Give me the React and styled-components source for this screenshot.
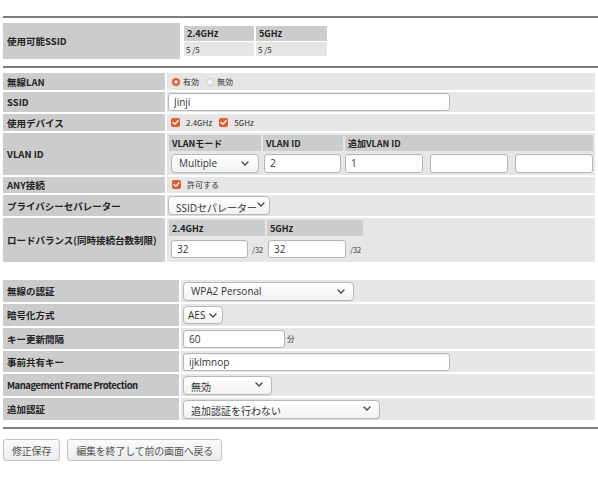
import React from 'react';
import styled, { createGlobalStyle } from 'styled-components';

const ORANGE = '#e5592c';
const LABEL_BG = '#cccccc';
const VALUE_BG = '#e6e6e6';

const GlobalStyle = createGlobalStyle`
  html, body {
    margin: 0;
    padding: 0;
    background: #fff;
  }
  body {
    font-family: "Noto Sans CJK JP", "Noto Sans", sans-serif;
    color: #222;
  }
`;

const App = () => (
  <Page>
    <GlobalStyle />
    <Rule $mt={0} $mb={3} />

    <FormTable>
      <tbody>
        <tr>
          <Label $w={177} $h={36}>使用可能SSID</Label>
          <Value $plain $pl={0}>
            <SubTable $spacing="2px 1px">
              <tbody>
                <tr>
                  <SubHead $w={70} $h={15}>2.4GHz</SubHead>
                  <SubHead $w={71} $h={15}>5GHz</SubHead>
                </tr>
                <tr>
                  <SubCell $bg={VALUE_BG} $h={14} $pl={2}>5 /5</SubCell>
                  <SubCell $bg={VALUE_BG} $h={14} $pl={2}>5 /5</SubCell>
                </tr>
              </tbody>
            </SubTable>
          </Value>
        </tr>
      </tbody>
    </FormTable>

    <Rule $mt={5} $mb={3} />

    <FormTable $w={596}>
      <tbody>
        <tr>
          <Label $w={162} $h={17}>無線LAN</Label>
          <Value $pl={5}>
            <Options>
              <Choice><Radio $on />有効</Choice>
              <Choice><Radio />無効</Choice>
            </Options>
          </Value>
        </tr>
        <tr>
          <Label $w={162} $h={20}>SSID</Label>
          <Value>
            <TextInput $w={282} defaultValue="Jinji" />
          </Value>
        </tr>
        <tr>
          <Label $w={162} $h={17}>使用デバイス</Label>
          <Value $pl={4}>
            <Options>
              <Choice $gap={6}><Check />2.4GHz</Choice>
              <Choice $gap={6}><Check />5GHz</Choice>
            </Options>
          </Value>
        </tr>
        <tr>
          <Label $w={162} $h={42}>VLAN ID</Label>
          <Value $pl={0}>
            <SubTable $full>
              <tbody>
                <tr>
                  <SubHead $w={92}>VLANモード</SubHead>
                  <SubHead $w={80}>VLAN ID</SubHead>
                  <SubHead>追加VLAN ID</SubHead>
                </tr>
                <tr>
                  <SubCell $h={20} $pl={2}>
                    <SelectBox $w={88} $pr={9}>Multiple<Chevron /></SelectBox>
                  </SubCell>
                  <SubCell $h={20} $pl={1}>
                    <TextInput $w={77} $h={19} defaultValue="2" />
                  </SubCell>
                  <SubCell $h={20} $pl={0}>
                    <InputRow>
                      <TextInput $w={78} $h={19} defaultValue="1" />
                      <TextInput $w={78} $h={19} defaultValue="" />
                      <TextInput $w={78} $h={19} defaultValue="" />
                    </InputRow>
                  </SubCell>
                </tr>
              </tbody>
            </SubTable>
          </Value>
        </tr>
        <tr>
          <Label $w={162} $h={16}>ANY接続</Label>
          <Value $pl={5}>
            <Choice $gap={6}><Check />許可する</Choice>
          </Value>
        </tr>
        <tr>
          <Label $w={162} $h={21}>プライバシーセパレーター</Label>
          <Value>
            <SelectBox $w={102} $pr={5} $raise>SSIDセパレーター<Chevron /></SelectBox>
          </Value>
        </tr>
        <tr>
          <Label $w={162} $h={44}>ロードバランス(同時接続台数制限)</Label>
          <Value $pl={0}>
            <SubTable>
              <tbody>
                <tr>
                  <SubHead $w={96}>2.4GHz</SubHead>
                  <SubHead $w={96}>5GHz</SubHead>
                </tr>
                <tr>
                  <SubCell $h={22} $pl={2}>
                    <Field>
                      <TextInput $w={77} $h={18} defaultValue="32" />
                      <Unit>/32</Unit>
                    </Field>
                  </SubCell>
                  <SubCell $h={22} $pl={1}>
                    <Field>
                      <TextInput $w={78} $h={18} defaultValue="32" />
                      <Unit>/32</Unit>
                    </Field>
                  </SubCell>
                </tr>
              </tbody>
            </SubTable>
          </Value>
        </tr>
      </tbody>
    </FormTable>

    <FormTable $w={596} $mt={14}>
      <tbody>
        <tr>
          <Label $w={176} $h={22}>無線の認証</Label>
          <Value $pl={2}>
            <SelectBox $w={171} $pr={8}>WPA2 Personal<Chevron /></SelectBox>
          </Value>
        </tr>
        <tr>
          <Label $w={176} $h={22}>暗号化方式</Label>
          <Value $pl={2}>
            <SelectBox $w={40} $h={18} $pl={4} $pr={5}>AES<Chevron /></SelectBox>
          </Value>
        </tr>
        <tr>
          <Label $w={176} $h={21}>キー更新間隔</Label>
          <Value $pl={2}>
            <Field>
              <TextInput $w={102} $h={18} defaultValue="60" />
              <Unit $gap={2}>分</Unit>
            </Field>
          </Value>
        </tr>
        <tr>
          <Label $w={176} $h={21}>事前共有キー</Label>
          <Value $pl={2}>
            <TextInput $w={267} defaultValue="ijklmnop" />
          </Value>
        </tr>
        <tr>
          <Label $w={176} $h={22} $tight>Management Frame Protection</Label>
          <Value $pl={2}>
            <SelectBox $w={89} $pr={8} $raise>無効<Chevron /></SelectBox>
          </Value>
        </tr>
        <tr>
          <Label $w={176} $h={22}>追加認証</Label>
          <Value $pl={2}>
            <SelectBox $w={197} $pr={8} $raise>追加認証を行わない<Chevron /></SelectBox>
          </Value>
        </tr>
      </tbody>
    </FormTable>

    <Rule $mt={5} $mb={0} />

    <Actions>
      <Button>修正保存</Button>
      <Button>編集を終了して前の画面へ戻る</Button>
    </Actions>
  </Page>
);

const Chevron = () => (
  <ChevronIcon width="8" height="5" viewBox="0 0 8 5">
    <polyline points="1,1 4,4 7,1" fill="none" stroke="#444" strokeWidth="1.3" strokeLinecap="round" strokeLinejoin="round" />
  </ChevronIcon>
);

const Check = () => (
  <CheckBox>
    <svg width="9" height="9" viewBox="0 0 9 9">
      <polyline points="2,4.6 3.8,6.3 7,2.8" fill="none" stroke="#fff" strokeWidth="1.4" strokeLinecap="round" strokeLinejoin="round" />
    </svg>
  </CheckBox>
);

const Page = styled.div`
  width: 597px;
  padding: 16px 0 0 1px;
`;

const Rule = styled.div`
  height: 2px;
  margin: ${p => p.$mt}px 0 ${p => p.$mb}px 2px;
  background: #7d7d7d;
`;

const FormTable = styled.table`
  border-collapse: separate;
  border-spacing: 2px;
  width: ${p => (p.$w ? `${p.$w}px` : 'auto')};
  margin-top: ${p => p.$mt || 0}px;
`;

const Label = styled.th`
  box-sizing: border-box;
  width: ${p => p.$w}px;
  height: ${p => p.$h}px;
  padding: 0 4px;
  background: ${LABEL_BG};
  text-align: left;
  vertical-align: middle;
  white-space: nowrap;
  font-size: 9.5px;
  font-weight: 700;
  letter-spacing: ${p => (p.$tight ? '-0.5px' : 'normal')};
  color: #222;
`;

const Value = styled.td`
  padding: 0 0 0 ${p => p.$pl ?? 1}px;
  background: ${p => (p.$plain ? 'transparent' : VALUE_BG)};
  vertical-align: middle;
  font-size: 8px;
  color: #333;
`;

const SubTable = styled.table`
  border-collapse: separate;
  border-spacing: ${p => p.$spacing || '2px'};
  width: ${p => (p.$full ? '100%' : 'auto')};
`;

const SubHead = styled.th`
  box-sizing: border-box;
  width: ${p => (p.$w ? `${p.$w}px` : 'auto')};
  height: ${p => p.$h || 16}px;
  padding: 0 0 0 3px;
  background: ${LABEL_BG};
  text-align: left;
  vertical-align: middle;
  white-space: nowrap;
  font-size: 9px;
  font-weight: 700;
  color: #222;
`;

const SubCell = styled.td`
  height: ${p => p.$h}px;
  padding: 0 0 0 ${p => p.$pl ?? 2}px;
  background: ${p => p.$bg || 'transparent'};
  vertical-align: middle;
  white-space: nowrap;
  font-size: 8px;
  color: #333;
`;

const Options = styled.div`
  display: flex;
  align-items: center;
  gap: 7px;
`;

const Choice = styled.span`
  display: inline-flex;
  align-items: center;
  gap: ${p => p.$gap ?? 3}px;
  font-size: 8px;
  color: #333;
`;

const Radio = styled.span`
  display: inline-block;
  box-sizing: border-box;
  width: 8px;
  height: 8px;
  border-radius: 50%;
  ${p =>
    p.$on
      ? `background: radial-gradient(circle, #fff 0 1.4px, ${ORANGE} 1.9px);`
      : 'background: #f7f7f7; border: 1px solid #c4c4c4;'}
`;

const CheckBox = styled.span`
  display: inline-flex;
  width: 9px;
  height: 9px;
  border-radius: 2px;
  background: ${ORANGE};
`;

const TextInput = styled.input`
  box-sizing: border-box;
  width: ${p => p.$w}px;
  height: ${p => p.$h || 18}px;
  margin: 0;
  padding: 0 5px;
  border: 1px solid #b6b6b6;
  border-radius: 3px;
  background: #fff;
  box-shadow: inset 0 1px 1px rgba(0, 0, 0, 0.04);
  font-family: "Open Sans", "Noto Sans CJK JP", sans-serif;
  font-size: 10px;
  color: #333;
  vertical-align: middle;
  outline: none;
`;

const InputRow = styled.div`
  display: flex;
  gap: 7px;
`;

const Field = styled.div`
  display: flex;
  align-items: center;
`;

const Unit = styled.span`
  margin-left: ${p => p.$gap ?? 4}px;
  font-size: 7.5px;
  color: #333;
`;

const SelectBox = styled.div`
  display: inline-flex;
  align-items: center;
  justify-content: space-between;
  box-sizing: border-box;
  width: ${p => p.$w}px;
  height: ${p => p.$h || 19}px;
  padding: 0 ${p => p.$pr ?? 6}px 0 ${p => p.$pl ?? 7}px;
  border: 1px solid #b8b8b8;
  border-radius: 4px;
  background: linear-gradient(#ffffff, #f2f2f2);
  box-shadow: 0 1px 0 rgba(0, 0, 0, 0.05);
  font-family: "Open Sans", "Noto Sans CJK JP", sans-serif;
  font-size: 10px;
  color: #333;
  white-space: nowrap;
  vertical-align: middle;

  svg {
    flex: none;
    margin-bottom: ${p => (p.$raise ? 5 : 0)}px;
  }
  ${p => (p.$raise ? 'padding-top: 3px;' : '')}
`;

const ChevronIcon = styled.svg`
  display: block;
`;

const Actions = styled.div`
  display: flex;
  gap: 7px;
  margin-top: 10px;
  padding-left: 2px;
`;

const Button = styled.button`
  box-sizing: border-box;
  height: 22px;
  margin: 0;
  padding: 0 8px;
  border: 1px solid #c3c3c3;
  border-radius: 3px;
  background: linear-gradient(#fbfbfb, #ebebeb);
  box-shadow: 0 1px 1px rgba(0, 0, 0, 0.08);
  font-family: "Noto Sans CJK JP", sans-serif;
  font-size: 10px;
  letter-spacing: -0.2px;
  color: #555;
`;

export default App;
